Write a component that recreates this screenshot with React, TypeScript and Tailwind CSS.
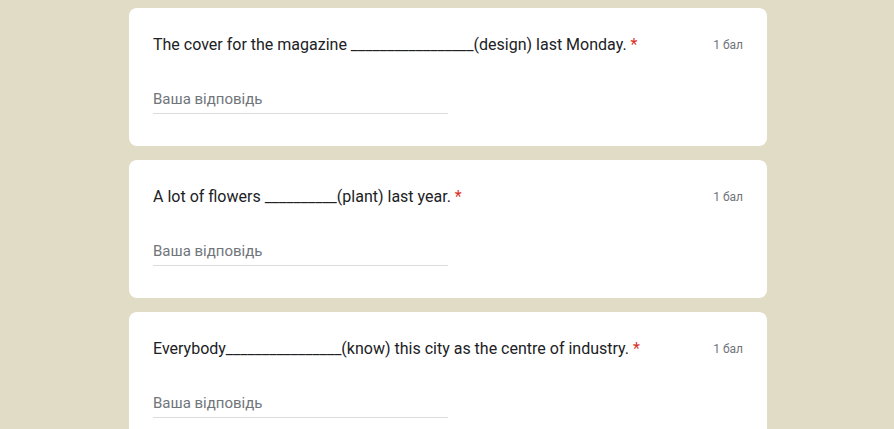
import React from "react";

const questions = [
  { id: 1, text: "The cover for the magazine _________________(design) last Monday." },
  { id: 2, text: "A lot of flowers __________(plant) last year." },
  { id: 3, text: "Everybody________________(know) this city as the centre of industry." },
];

const QuestionCard = ({ text }: { text: string }) => (
  <div className="bg-white rounded-lg pt-[25px] pb-8 pl-6 pr-6 h-[138px]">
    <div className="flex items-start justify-between">
      <div className="text-[16px] leading-6 text-[#202124]">
        {text} <span className="text-[#d93025]">*</span>
      </div>
      <div className="text-[12px] leading-6 text-[#70757a] shrink-0 pl-4">1 бал</div>
    </div>
    <div className="mt-[32px] w-[295px] border-b border-[#dadce0] pb-[4px]">
      <div className="text-[15px] leading-5 text-[#70757a]">Ваша відповідь</div>
    </div>
  </div>
);

export default function App() {
  return (
    <div
      className="w-[894px] h-[429px] overflow-hidden bg-[#e0dcc5]"
      style={{ fontFamily: "Roboto, Arial, sans-serif" }}
    >
      <div className="w-[638px] ml-[129px] pt-2 flex flex-col gap-[14px]">
        {questions.map((q) => (
          <QuestionCard key={q.id} text={q.text} />
        ))}
      </div>
    </div>
  );
}
